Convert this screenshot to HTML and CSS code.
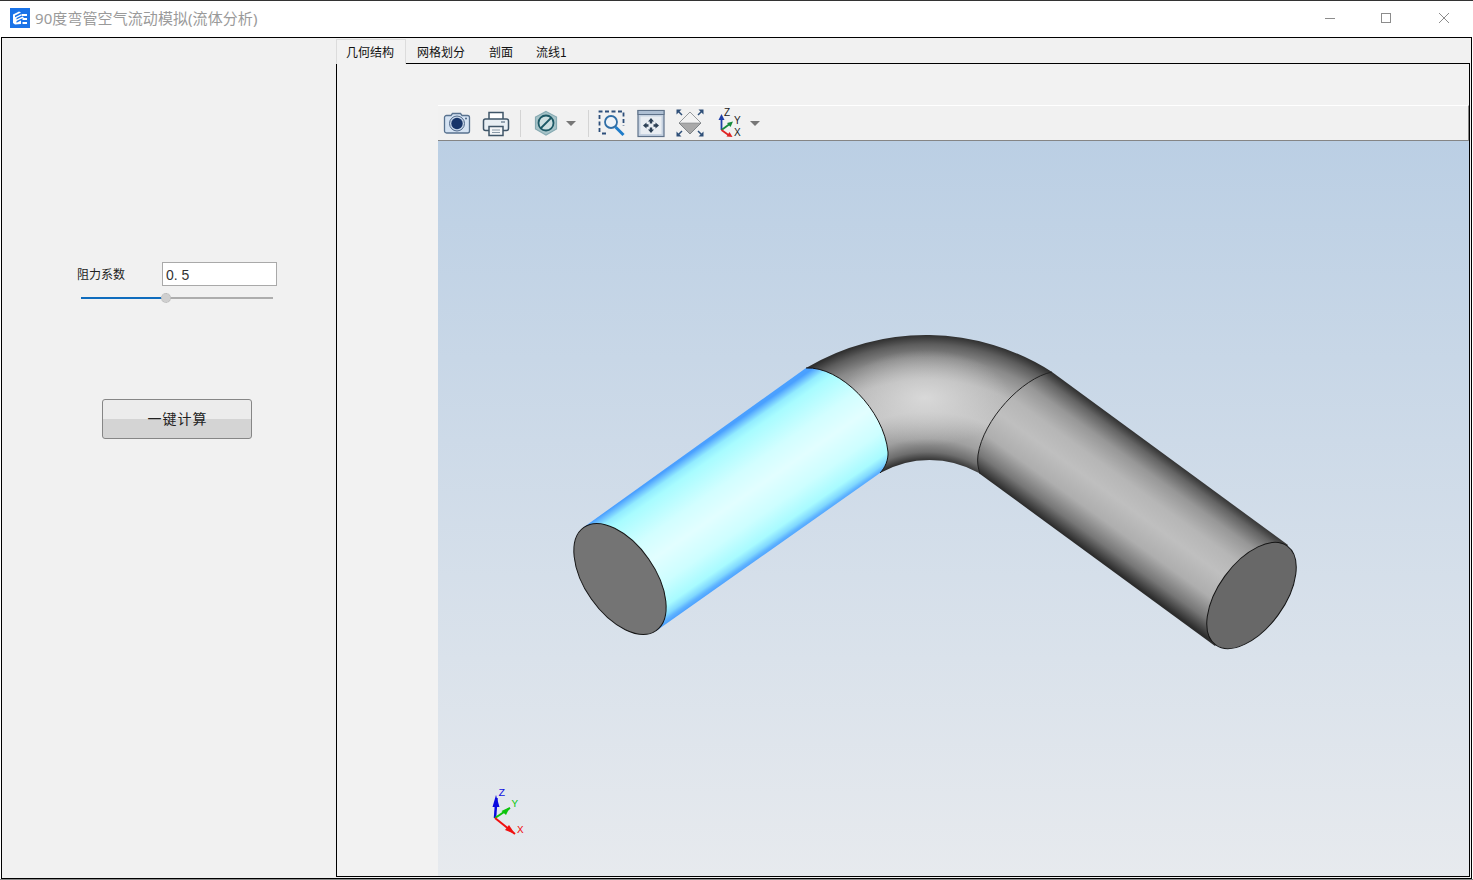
FILE: index.html
```html
<!DOCTYPE html>
<html lang="zh">
<head>
<meta charset="utf-8">
<title>90度弯管空气流动模拟(流体分析)</title>
<link rel="stylesheet" href="styles.css">
</head>
<body>
<div class="window">
  <header class="titlebar">
    <svg class="logo" viewBox="0 0 20 20">
      <rect width="20" height="20" fill="#1a73e8"/>
      <path d="M3 6.500 9 3.500 11 4.600 5 7.600V9.200L11 6.200 12.600 7 6.500 10V11.600L12.600 8.600 14 9.400 6.500 13V14.800L11 12.600V16L5 16.400 3 15Z" fill="#fff"/>
      <path d="M12 6h5v2h-5zM12.500 10H17v2h-4.500zM12.500 14H17v2h-4.500z" fill="#fff"/>
    </svg>
    <span class="title">90度弯管空气流动模拟(流体分析)</span>
    <div class="controls">
      <svg class="ctl" viewBox="0 0 12 12"><path d="M1 6.500H11" stroke="#8c8c8c" fill="none"/></svg>
      <svg class="ctl" viewBox="0 0 12 12"><rect x="1.500" y="1.500" width="9" height="9" stroke="#8c8c8c" fill="none"/></svg>
      <svg class="ctl" viewBox="0 0 12 12"><path d="M1 1 11 11M11 1 1 11" stroke="#8c8c8c" fill="none"/></svg>
    </div>
  </header>
  <main class="main">
    <aside class="side">
      <div class="param">
        <label class="param-label">阻力系数</label>
        <input class="param-input" value="0. 5">
      </div>
      <div class="slider"><div class="slider-fill"></div><div class="slider-rest"></div><div class="slider-knob"></div></div>
      <button class="calc"><span>一键计算</span></button>
    </aside>
    <section class="work">
      <nav class="tabs">
        <div class="tab active">几何结构</div>
        <div class="tab">网格划分</div>
        <div class="tab tab3">剖面</div>
        <div class="tab tab4">流线1</div>
      </nav>
      <div class="pane">
        <div class="viewer">
          <div class="toolbar">
            <svg class="ti" viewBox="0 0 28 28">
              <path d="M1.500 8.500a2 2 0 0 1 2-2H8l1.500-2h8l1.500 2h5.500a2 2 0 0 1 2 2v13.500a2 2 0 0 1-2 2h-21a2 2 0 0 1-2-2z" fill="#d5e3f3" stroke="#58728f" stroke-width="1.300"/>
              <circle cx="14" cy="14.500" r="7.500" fill="#c5d5e8" stroke="#50698a"/>
              <circle cx="14" cy="14.500" r="5.700" fill="#17356a"/>
              <circle cx="23" cy="9.500" r="1" fill="#4a6484"/>
            </svg>
            <svg class="ti" viewBox="0 0 28 28">
              <path d="M7 10V3.500h14V10" fill="#fff" stroke="#3f5568" stroke-width="1.500"/>
              <rect x="1.500" y="10" width="25" height="11.500" rx="2" fill="#e8eef3" stroke="#3f5568" stroke-width="1.500"/>
              <path d="M19 13h4" stroke="#77889a" stroke-width="1.500"/>
              <rect x="7" y="17.500" width="14" height="9" fill="#f3f5f7" stroke="#3f5568" stroke-width="1.500"/>
              <path d="M10 21h8M10 23.500h8" stroke="#8a9aa8"/>
            </svg>
            <div class="sep"></div>
            <svg class="ti hex" viewBox="0 0 28 28">
              <path d="M14 2.500 24.500 8v12L14 26 3.500 20V8Z" fill="#a6c3c8" stroke="#86aab2" stroke-width="1.200"/>
              <circle cx="14" cy="14" r="7.500" fill="#cfe0e2" stroke="#1d5966" stroke-width="1.800"/>
              <path d="M9 19 19 9" stroke="#1d5966" stroke-width="1.800"/>
            </svg>
            <div class="caret"></div>
            <div class="sep sep2"></div>
            <svg class="ti zoomi" viewBox="0 0 28 28">
              <path d="M1.500 23V2.500h24V17M8 24.500H1.500" fill="none" stroke="#2d4f7b" stroke-width="1.800" stroke-dasharray="4 2.500"/>
              <circle cx="13" cy="13" r="6" fill="#eef3f8" stroke="#2f6ea6" stroke-width="1.800"/>
              <path d="M17.500 18 25.500 26" stroke="#1f7cc9" stroke-width="3"/>
            </svg>
            <svg class="ti" viewBox="0 0 28 28">
              <rect x="1" y="1.500" width="26" height="26" fill="#c6d2e1" stroke="#5f728a" stroke-width="1.200"/>
              <rect x="1" y="1.500" width="26" height="4" fill="#aebfd3" stroke="#5f728a"/>
              <rect x="3.500" y="7.500" width="21" height="17.500" fill="#e9edf2"/>
              <path d="M14 9 17 12.500H15.200V14.500H12.800V12.500H11ZM14 24 17 20.500H15.200V18.500H12.800V20.500H11ZM6 16.500 9.500 13.500V15.300H11.500V17.700H9.500V19.500ZM22 16.500 18.500 13.500V15.300H16.500V17.700H18.500V19.500Z" fill="#2b3f55"/>
            </svg>
            <svg class="ti" viewBox="0 0 28 28">
              <path d="M14 3 25 14 14 25 3 14Z" fill="#a9a9a9" stroke="#7f8488"/>
              <path d="M14 3 25 14H3Z" fill="#f2f2f2" stroke="#7f8488" stroke-width=".6"/>
              <path d="M2.500 2.500 6 6M25.500 2.500 22 6M2.500 25.500 6 22M25.500 25.500 22 22" stroke="#2e4f78" stroke-width="1.500"/>
              <path d="M.5.500H5.500L.5 5.500ZM27.500.500H22.500L27.500 5.500ZM.5 27.500H5.500L.5 22.500ZM27.500 27.500H22.500L27.500 22.500Z" fill="#2e4f78"/>
            </svg>
            <svg class="ti axes" viewBox="0 0 28 28">
              <path d="M6.500 21V9" stroke="#1f3fa8" stroke-width="1.800"/>
              <path d="M6.500 5 9.500 11H3.500Z" fill="#1f3fa8"/>
              <path d="M6.500 21 14 15.500" stroke="#168a3c" stroke-width="1.800"/>
              <path d="M18 12.500 15.500 18 12 14Z" fill="#168a3c"/>
              <path d="M6.500 21 13.500 26" stroke="#e02424" stroke-width="1.800"/>
              <path d="M17.500 28 11.500 27.500 14.500 23Z" fill="#e02424"/>
              <text class="axl" x="9" y="7">Z</text>
              <text class="axl" x="19" y="15">Y</text>
              <text class="axl" x="19" y="27">X</text>
            </svg>
            <div class="caret caret2"></div>
          </div>
          <div class="scene">
            <svg class="scene-svg" viewBox="438 141 1031 735" preserveAspectRatio="none">
              <defs>
                <linearGradient id="cyl" gradientUnits="userSpaceOnUse" x1="584" y1="527" x2="656" y2="631">
                  <stop offset="0" stop-color="#4aa0ff"/>
                  <stop offset=".03" stop-color="#6cc0ff"/>
                  <stop offset=".07" stop-color="#92ecff"/>
                  <stop offset=".13" stop-color="#a8fcff"/>
                  <stop offset=".35" stop-color="#d2feff"/>
                  <stop offset=".52" stop-color="#e2feff"/>
                  <stop offset=".72" stop-color="#cdfeff"/>
                  <stop offset=".88" stop-color="#a8fbff"/>
                  <stop offset=".94" stop-color="#80d8ff"/>
                  <stop offset=".97" stop-color="#5eb2ff"/>
                  <stop offset="1" stop-color="#4aa0ff"/>
                </linearGradient>
                <linearGradient id="grayR" gradientUnits="userSpaceOnUse" x1="1052" y1="372" x2="979" y2="473">
                  <stop offset="0" stop-color="#2e2e2e"/>
                  <stop offset=".08" stop-color="#646464"/>
                  <stop offset=".2" stop-color="#979797"/>
                  <stop offset=".36" stop-color="#b6b6b6"/>
                  <stop offset=".52" stop-color="#bfbfbf"/>
                  <stop offset=".72" stop-color="#aeaeae"/>
                  <stop offset=".88" stop-color="#767676"/>
                  <stop offset="1" stop-color="#2c2c2c"/>
                </linearGradient>
                <radialGradient id="bend" gradientUnits="userSpaceOnUse" cx="927" cy="560" r="225">
                  <stop offset=".44" stop-color="#2e2e2e"/>
                  <stop offset=".48" stop-color="#6e6e6e"/>
                  <stop offset=".54" stop-color="#a0a0a0"/>
                  <stop offset=".66" stop-color="#c4c4c4"/>
                  <stop offset=".8" stop-color="#b8b8b8"/>
                  <stop offset=".9" stop-color="#8a8a8a"/>
                  <stop offset=".96" stop-color="#5c5c5c"/>
                  <stop offset="1" stop-color="#303030"/>
                </radialGradient>
                <radialGradient id="spot" gradientUnits="userSpaceOnUse" cx="0" cy="0" r="1" gradientTransform="translate(925 398) scale(85 48)">
                  <stop offset="0" stop-color="#dadada" stop-opacity=".95"/>
                  <stop offset="1" stop-color="#d0d0d0" stop-opacity="0"/>
                </radialGradient>
              </defs>
              <path d="M806 368A234 234 0 0 1 1052 372L979 473A100 100 0 0 0 880 473Z" fill="url(#bend)"/>
              <path d="M806 368A234 234 0 0 1 1052 372L979 473A100 100 0 0 0 880 473Z" fill="url(#spot)"/>
              <path d="M1052 372 1288 545 1215 646 980 474C978 468 977 462 978 455 983 420 1022 378 1052 372Z" fill="url(#grayR)"/>
              <path d="M1052 372C1022 378 983 420 978 455 977 462 978 468 980 474" fill="none" stroke="#222" stroke-width="1"/>
              <path d="M584 527 806 368C840 366 884 410 888 452 888.500 460 885 468 880 473L656 631Z" fill="url(#cyl)"/>
              <path d="M806 368C840 366 884 410 888 452 888.500 460 885 468 880 473" fill="none" stroke="#151515" stroke-width="1"/>
              <ellipse cx="620" cy="579" rx="63" ry="35" transform="rotate(55 620 579)" fill="#747474" stroke="#151515" stroke-width="1"/>
              <ellipse cx="1251.500" cy="595.500" rx="61" ry="33" transform="rotate(-54 1251.500 595.500)" fill="#686868" stroke="#151515" stroke-width="1"/>
              <path d="M495 818 496.500 798" stroke="#0a0ae0" stroke-width="2.500"/>
              <path d="M496 795 499.500 807H492.500Z" fill="#0a0ae0"/>
              <path d="M495 818 510 808" stroke="#0cc40c" stroke-width="2"/>
              <path d="M510 807 506 815 501.500 811Z" fill="#0cc40c"/>
              <path d="M495 818 515 834" stroke="#f01010" stroke-width="2"/>
              <path d="M515 834 505 830 509 825Z" fill="#f01010"/>
              <text class="tri tz" x="498.500" y="796">Z</text>
              <text class="tri ty" x="511.500" y="807">Y</text>
              <text class="tri tx" x="517" y="833">X</text>
            </svg>
          </div>
        </div>
      </div>
    </section>
  </main>
</div>
</body>
</html>
```

FILE: styles.css
```css
* { box-sizing: border-box; }
html, body { margin: 0; padding: 0; }
body {
  width: 1473px;
  height: 880px;
  overflow: hidden;
  background: #fff;
  font-family: "Noto Sans", "Noto Sans CJK SC", sans-serif;
}
.window {
  width: 1473px;
  height: 880px;
  display: flex;
  flex-direction: column;
  border-bottom: 1px solid #8a8a8a;
}
.titlebar {
  height: 37px;
  flex: none;
  display: flex;
  align-items: center;
  padding: 0 0 2px 10px;
  border-top: 1px solid #333;
  background: #fff;
}
.logo { width: 20px; height: 20px; flex: none; }
.title {
  margin-left: 5px;
  font-size: 15px;
  line-height: 20px;
  letter-spacing: .08px;
  color: #9a9a9a;
  white-space: nowrap;
}
.controls {
  margin-left: auto;
  display: flex;
  gap: 46px;
  padding-right: 23px;
}
.ctl { width: 12px; height: 12px; display: block; }
.ctl:first-child { margin-right: -2px; }
.main {
  flex: 1;
  display: flex;
  margin: 0 1px;
  border: 1px solid #000;
  background: #f1f1f1;
  min-height: 0;
}
.side {
  width: 334px;
  flex: none;
  display: flex;
  flex-direction: column;
  padding-top: 224px;
}
.param {
  display: flex;
  align-items: center;
  padding-left: 75px;
}
.param-label {
  width: 85px;
  margin-top: 2px;
  font-size: 12px;
  line-height: 16px;
  color: #222;
}
.param-input {
  width: 115px;
  height: 24px;
  border: 1px solid #a9a9a9;
  background: #fff;
  padding: 1px 3px 0;
  font: 14px/21px "Liberation Sans", sans-serif;
  color: #333;
  outline: none;
}
.slider {
  position: relative;
  width: 192px;
  height: 2px;
  margin: 11px 0 0 79px;
  display: flex;
}
.slider-fill { width: 85px; background: #0f6cbd; }
.slider-rest { flex: 1; background: #adadad; }
.slider-knob {
  position: absolute;
  left: 80px;
  top: -4px;
  width: 10px;
  height: 10px;
  border-radius: 50%;
  background: #cfcfcf;
  border: 1px dotted #b5b5b5;
}
.calc {
  width: 150px;
  height: 40px;
  margin: 100px 0 0 100px;
  padding: 0 0 2px 1px;
  border: 1px solid #868686;
  border-radius: 3px;
  background: linear-gradient(#ececec 0, #ececec 50%, #d4d4d4 50%, #d4d4d4 100%);
  font-family: "Noto Sans CJK SC", sans-serif;
  font-size: 14px;
  letter-spacing: 1px;
  color: #222;
}
.work {
  flex: 1;
  display: flex;
  flex-direction: column;
  min-width: 0;
  margin: 0 1px 1px 0;
}
.tabs {
  height: 26px;
  flex: none;
  display: flex;
  padding-top: 1px;
  margin-bottom: -1px;
  position: relative;
  z-index: 1;
}
.tab {
  height: 25px;
  padding: 0 10px;
  margin-right: 1px;
  font-family: "Noto Sans CJK SC", sans-serif;
  font-size: 12px;
  line-height: 26px;
  color: #111;
  white-space: nowrap;
}
.tab.active {
  width: 70px;
  height: 25px;
  background: #f2f2f2;
  border: 1px solid #dcdcdc;
  border-bottom: 0;
  line-height: 24px;
  padding: 0 9px;
}
.tab3 { margin-left: 3px; }
.tab4 { margin-left: 2px; }
.pane {
  flex: 1;
  min-height: 0;
  border: 1px solid #000;
  background: #f2f2f2;
  padding: 41px 0 0 101px;
  display: flex;
}
.viewer {
  flex: 1;
  display: flex;
  flex-direction: column;
  min-width: 0;
}
.toolbar {
  height: 36px;
  flex: none;
  display: flex;
  align-items: center;
  gap: 11px;
  padding-left: 5px;
  background: #f1f1f1;
  border-top: 1px solid #fff;
  border-bottom: 1px solid #858585;
  border-right: 1px solid #858585;
}
.ti { width: 28px; height: 28px; flex: none; display: block; overflow: visible; }
.sep { width: 1px; height: 27px; background: #d4d4d4; flex: none; margin-left: -1px; }
.caret {
  width: 0;
  height: 0;
  flex: none;
  border-left: 5px solid transparent;
  border-right: 5px solid transparent;
  border-top: 5px solid #777;
  margin-left: -5px;
}
.sep2 { margin-left: 1px; }
.zoomi { margin-left: -2px; }
.caret2 { margin-left: -4px; }
.axl { font: 10px "Liberation Sans", sans-serif; fill: #222; }
.scene {
  flex: 1;
  min-height: 0;
  background: linear-gradient(#bbcfe4, #e7eaee);
}
.scene-svg { display: block; width: 100%; height: 100%; }
.tri { font: 11px "Liberation Mono", monospace; }
.tz { fill: #1010e0; }
.ty { fill: #10c810; }
.tx { fill: #f01010; }
```
